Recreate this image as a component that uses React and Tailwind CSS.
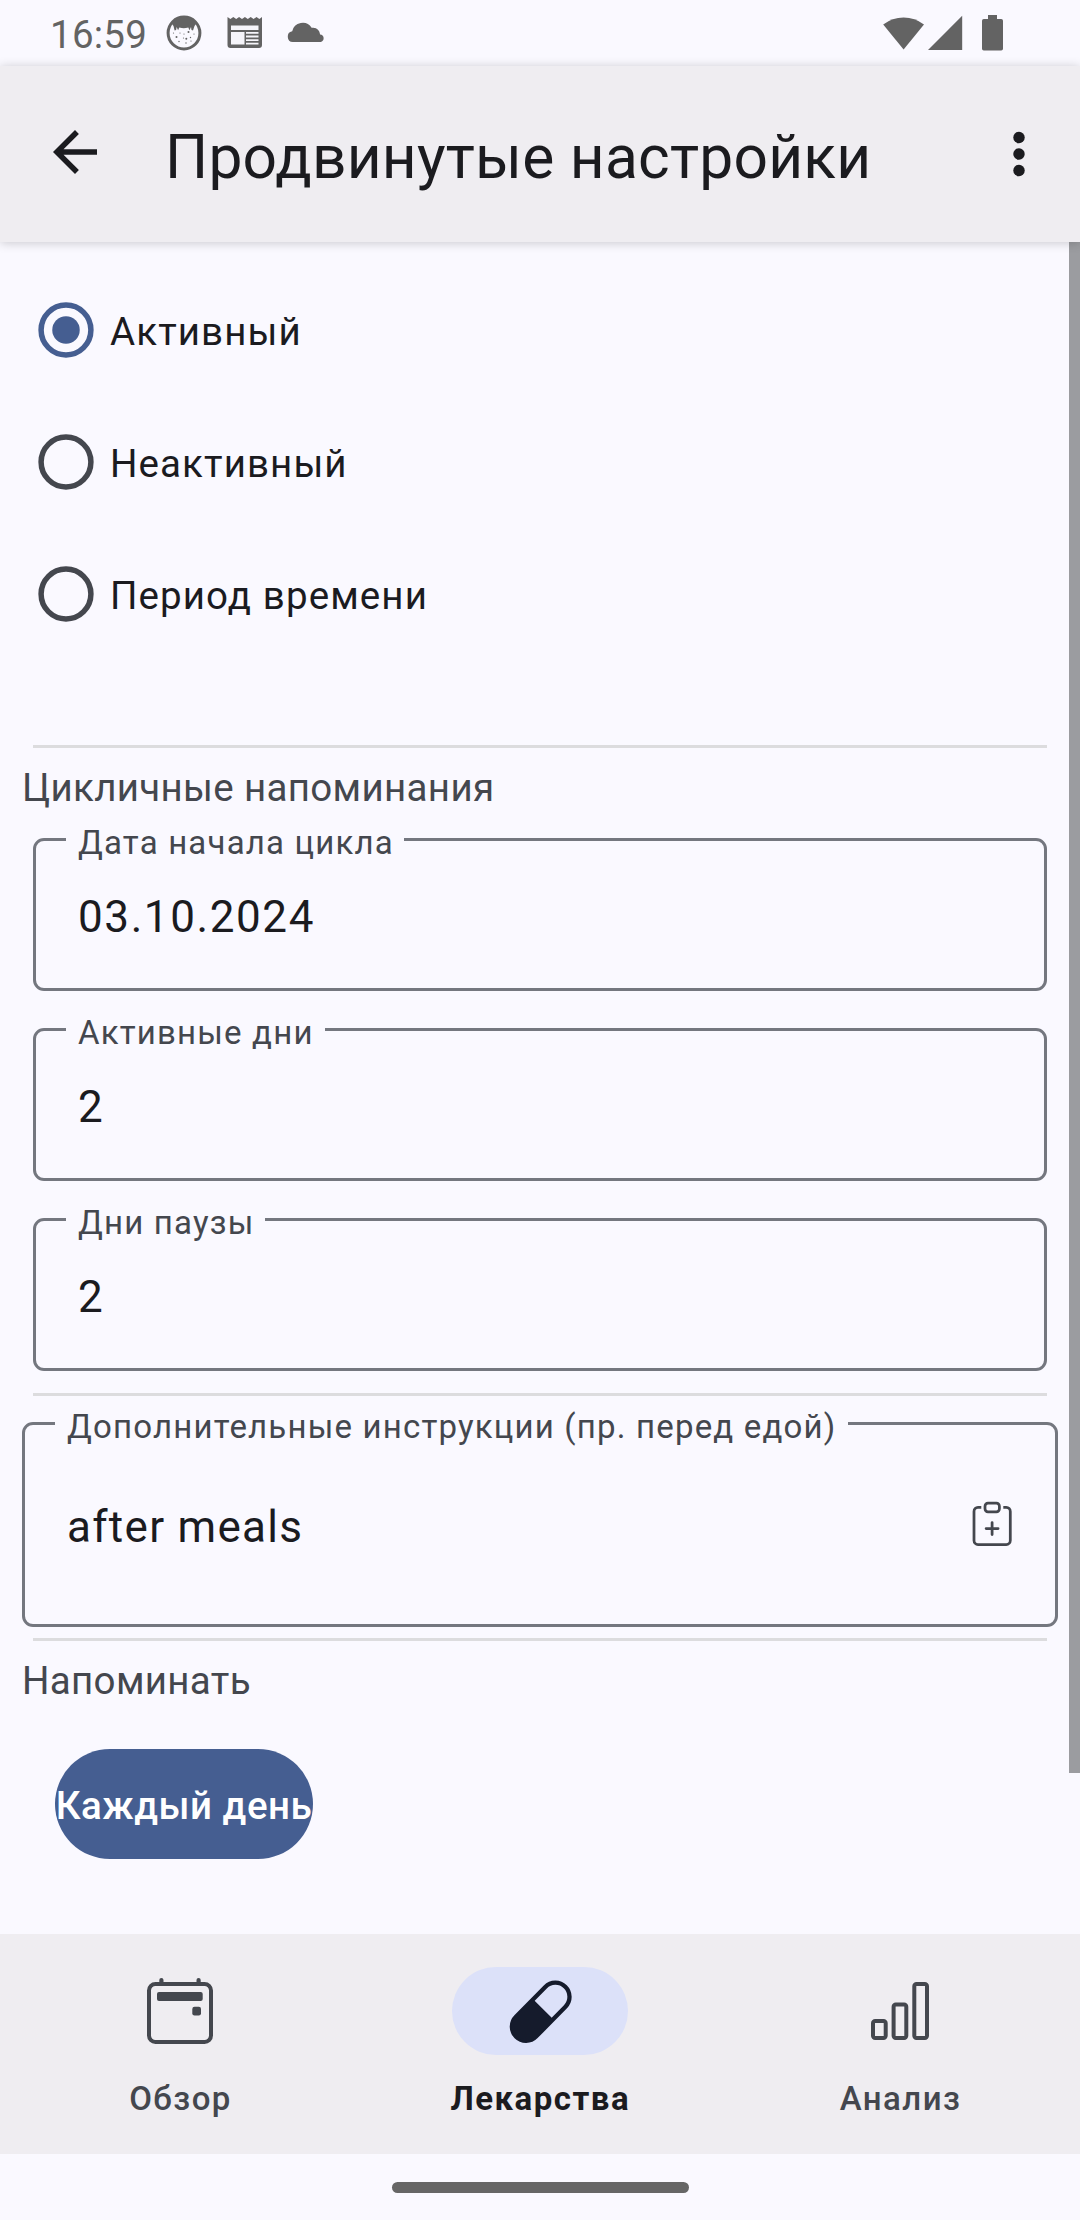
import React from "react";

function FaceIcon() {
  return (
    <svg width="36" height="36" viewBox="0 0 36 36">
      <circle cx="18" cy="18" r="15.9" fill="#faf9ff" stroke="#636363" strokeWidth="3" />
      <path d="M6 9C9 4 13 2 18 2s9 2 12 7l-1.500 2-1.500 4.500-1.500-.5-.5-3-1.500 3.200-1.200-2.700c-3.500 1-5.500 1-9 0l-1.200 2.700-1.500-3.200-.5 3-1.500.5L7.500 11z" fill="#636363" />
      <g fill="#636363">
        <circle cx="10.500" cy="22" r="1" /><circle cx="14" cy="18" r=".6" /><circle cx="22.500" cy="17" r="1" />
        <circle cx="17.500" cy="23" r=".6" /><circle cx="24.500" cy="22.500" r=".7" /><circle cx="13" cy="26.500" r=".7" />
        <circle cx="20.300" cy="23.700" r="1" /><circle cx="20" cy="28" r=".7" /><circle cx="7.500" cy="18" r=".6" />
        <circle cx="28" cy="19" r=".6" /><circle cx="18" cy="19" r=".6" /><circle cx="25" cy="26" r=".6" />
      </g>
    </svg>
  );
}

function NewsIcon() {
  return (
    <svg width="36" height="32" viewBox="0 0 36 32">
      <path d="M.5 0l2.900 2L6.300 0l2.900 2 2.900-2L15 2l2.900-2 2.900 2 2.900-2 2.900 2 2.900-2 2.900 2L35 0v28a3 3 0 0 1-3 3H3.500a3 3 0 0 1-3-3z" fill="#636363" />
      <path d="M4 8.500h27.500v4.500H4zM4 15h13.500v12.500H4zM19 15h12.500v1.800H19zM19 18.600h12.500v1.800H19zM19 22.200h12.500v1.800H19zM19 25.700h12.500v1.800H19z" fill="#f6f5fa" />
    </svg>
  );
}

function CloudIcon() {
  return (
    <svg width="38" height="22" viewBox="0 0 38 22">
      <path d="M5.800 21a5.400 5.400 0 0 1-.6-10.700A10.600 10.600 0 0 1 24.600 6.800c5-.9 8 2.400 8.500 6.600a3.900 3.900 0 0 1 .8 7.600z" fill="#636363" />
    </svg>
  );
}

function StatusBar() {
  return (
    <div className="h-[66px] flex items-center pl-[50px] pr-[76px] text-[#636363]">
      <span className="text-[38.5px] leading-[44px] pt-[4px] w-[115px] tracking-[0.25px] whitespace-nowrap">16:59</span>
      <div className="ml-[0.5px] flex items-center">
        <FaceIcon />
        <div className="ml-[25px]"><NewsIcon /></div>
        <div className="ml-[24px] -mt-[2px]"><CloudIcon /></div>
      </div>
      <div className="ml-auto flex items-center h-[36px]">
        <svg width="42" height="36" viewBox="0 0 42 36">
          <path d="M.2 9.500A33 33 0 0 1 41 9.500L20.600 34.500z" fill="#636363" />
        </svg>
        <svg className="ml-[3px]" width="35" height="36" viewBox="0 0 35 36">
          <path d="M0 35L34.200.7V35z" fill="#636363" />
        </svg>
        <svg className="ml-[19px]" width="22" height="36" viewBox="0 0 22 36">
          <path d="M6 0h9v4h4.200A1.800 1.800 0 0 1 21 5.800v28a1.800 1.800 0 0 1-1.800 1.800H1.800A1.800 1.800 0 0 1 0 33.800v-28A1.800 1.800 0 0 1 1.800 4H6z" fill="#636363" />
        </svg>
      </div>
    </div>
  );
}

function AppBar() {
  return (
    <header className="relative z-10 h-[176px] bg-[#efedf1] shadow-[0_1px_10px_rgba(0,0,0,0.2)] flex items-center pl-[42px] pr-[28px] text-[#1b1b1f]">
      <svg className="-mt-[4px]" width="66" height="66" viewBox="0 0 24 24" fill="currentColor">
        <path d="M20 11H7.830l5.590-5.590L12 4l-8 8 8 8 1.410-1.410L7.830 13H20v-2z" />
      </svg>
      <h1 className="ml-[57px] pt-[7px] text-[60.5px] leading-[72px] tracking-[0.22px] whitespace-nowrap">Продвинутые настройки</h1>
      <svg className="ml-auto" width="66" height="66" viewBox="0 0 24 24" fill="currentColor">
        <circle cx="12" cy="6" r="2.080" />
        <circle cx="12" cy="12" r="2.080" />
        <circle cx="12" cy="18" r="2.080" />
      </svg>
    </header>
  );
}

function Radio({ label, checked }) {
  const color = checked ? "#455e91" : "#44474e";
  return (
    <div className="h-[132px] flex items-center pl-[38px]">
      <svg width="56" height="56" viewBox="0 0 56 56">
        <circle cx="28" cy="28" r="24.900" fill="none" stroke={color} strokeWidth="5.500" />
        {checked && <circle cx="28" cy="28" r="13.750" fill={color} />}
      </svg>
      <span className="ml-[16px] pt-[4px] text-[38.5px] leading-[52px] tracking-[1.1px] text-[#1b1b1f]">{label}</span>
    </div>
  );
}

function Divider({ className }) {
  return <div className={`h-[3px] ml-[33px] mr-[33px] bg-[#dcdcde] ${className}`} />;
}

function Field({ label, value, className, legendClass, bodyClass, valueClass, icon }) {
  return (
    <fieldset className={`border-[3px] border-[#74777f] rounded-[11px] ${className}`}>
      <legend className={`ml-[30px] pl-[12px] h-[3px] leading-[9px] text-[33px] tracking-[1.18px] text-[#44474e] whitespace-nowrap ${legendClass}`}>
        {label}
      </legend>
      <div className={`flex items-center justify-between pl-[42px] ${bodyClass}`}>
        <span className={`pt-[5px] text-[44px] leading-[52px] text-[#1b1b1f] ${valueClass}`}>{value}</span>
        {icon}
      </div>
    </fieldset>
  );
}

function ClipboardIcon() {
  return (
    <svg className="mr-[30px] -mt-[1px]" width="66" height="66" viewBox="0 0 66 66" fill="none" stroke="#44474e" strokeWidth="2.75">
      <path d="M22.300 16.400H19a4 4 0 0 0-4 4V49.500a4 4 0 0 0 4 4H47.300a4 4 0 0 0 4-4V20.400a4 4 0 0 0-4-4H44.300" />
      <rect x="26" y="12.200" width="14.400" height="8.600" rx="3" />
      <path d="M33.100 31.500v12M27.100 37.500h12" strokeLinecap="round" />
    </svg>
  );
}

function NavItem({ label, active, children }) {
  return (
    <div className="flex-1 flex flex-col items-center pt-[33px]">
      <div className={active
        ? "w-[176px] h-[88px] rounded-full bg-[#dce1f9] flex items-center justify-center"
        : "w-[176px] h-[88px] flex items-center justify-center"}>
        {children}
      </div>
      <span className={active
        ? "mt-[22px] pl-[0.5px] text-[33px] leading-[44px] tracking-[1.5px] font-bold text-[#1b1b1f]"
        : "mt-[22px] pl-[1px] text-[33px] leading-[44px] tracking-[1.45px] font-medium text-[#44474e]"}>
        {label}
      </span>
    </div>
  );
}

export default function App() {
  return (
    <div className="w-[1080px] h-[2220px] overflow-hidden bg-[#faf9ff] font-['Roboto',sans-serif] flex flex-col">
      <StatusBar />
      <AppBar />
      <main className="h-[1692px] flex">
        <div className="w-[1069px] flex flex-col pt-[22px]">
          <Radio label="Активный" checked />
          <Radio label="Неактивный" />
          <Radio label="Период времени" />
          <div className="w-[1080px] flex flex-col">
            <Divider className="mt-[85px]" />
            <h2 className="ml-[22px] mt-[14px] text-[38.5px] leading-[52px] tracking-[0.33px] text-[#44474e]">Цикличные напоминания</h2>
            <Field label="Дата начала цикла" value="03.10.2024" className="mt-[24px] ml-[33px] w-[1014px] h-[153px]" legendClass="w-[338px]" bodyClass="h-[147px]" valueClass="tracking-[1.6px]" />
            <Field label="Активные дни" value="2" className="mt-[37px] ml-[33px] w-[1014px] h-[153px]" legendClass="w-[259px]" bodyClass="h-[147px]" valueClass="tracking-[1.6px]" />
            <Field label="Дни паузы" value="2" className="mt-[37px] ml-[33px] w-[1014px] h-[153px]" legendClass="w-[199px]" bodyClass="h-[147px]" valueClass="tracking-[1.6px]" />
            <Divider className="mt-[22px]" />
            <Field
              label="Дополнительные инструкции (пр. перед едой)"
              value="after meals"
              className="mt-[26px] ml-[22px] w-[1036px] h-[205px]"
              legendClass="w-[793px]"
              bodyClass="h-[199px]"
              valueClass="tracking-[1.3px]"
              icon={<ClipboardIcon />}
            />
            <Divider className="mt-[11px]" />
            <h2 className="ml-[22px] mt-[14px] text-[38.5px] leading-[52px] tracking-[0.33px] text-[#44474e]">Напоминать</h2>
            <button className="ml-[55px] mt-[42px] w-[258px] h-[110px] rounded-full bg-[#455e91] flex items-center justify-center">
              <span className="pt-[4px] text-[38.5px] leading-[52px] tracking-[0.5px] font-medium text-white whitespace-nowrap">Каждый день</span>
            </button>
          </div>
        </div>
        <div className="w-[11px] h-[1531px] bg-[#9b9ca0]" />
      </main>
      <nav className="h-[220px] bg-[#efedf1] flex">
        <NavItem label="Обзор">
          <svg width="66" height="66" viewBox="0 0 66 66" fill="#44474e">
            <path d="M12.300 5V2.100a2.100 2.100 0 0 1 4.200 0V5zM49.500 5V2.100a2.100 2.100 0 0 1 4.200 0V5z" />
            <rect x="2" y="6" width="62" height="58" rx="6.500" fill="none" stroke="#44474e" strokeWidth="4" />
            <rect x="10" y="14" width="45.700" height="9" rx="2" />
            <rect x="45.300" y="28.700" width="8.700" height="8.700" rx="2.200" />
          </svg>
        </NavItem>
        <NavItem label="Лекарства" active>
          <svg width="66" height="66" viewBox="0 0 66 66">
            <g transform="translate(19 48.700) rotate(-45.500)">
              <rect x="-14.150" y="-14.150" width="70.200" height="28.300" rx="14.150" fill="none" stroke="#151b2c" strokeWidth="4.300" />
              <path d="M24.500-14.500H0a14.500 14.500 0 0 0 0 29h24.500z" fill="#151b2c" />
            </g>
          </svg>
        </NavItem>
        <NavItem label="Анализ">
          <svg width="66" height="66" viewBox="0 0 66 66" fill="none" stroke="#44474e" strokeWidth="4">
            <rect x="6" y="43" width="12.700" height="17" rx="2.200" />
            <rect x="26.600" y="26.600" width="12.700" height="33.400" rx="2.200" />
            <rect x="47.300" y="6" width="12.700" height="54" rx="2.200" />
          </svg>
        </NavItem>
      </nav>
      <div className="h-[66px] flex items-center justify-center">
        <div className="w-[297px] h-[11px] rounded-full bg-[#666666]" />
      </div>
    </div>
  );
}
